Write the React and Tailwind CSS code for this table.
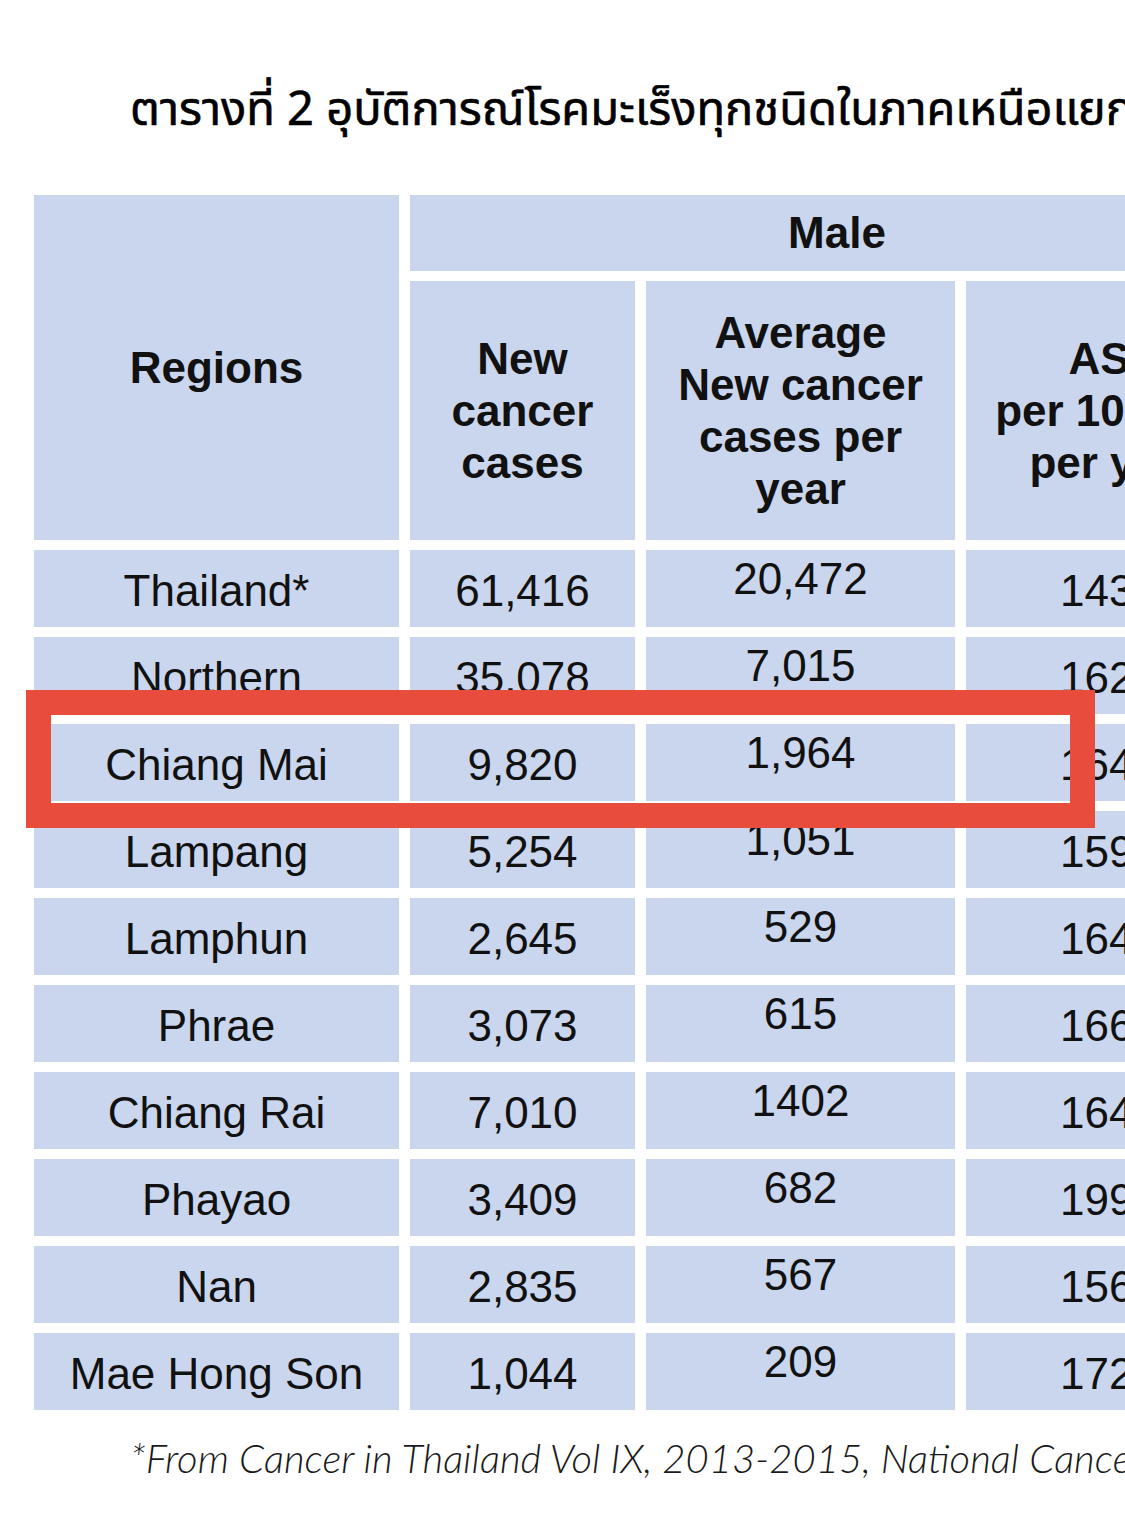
import React from "react";

const rows = [
  { region: "Thailand*", cases: "61,416", avg: "20,472", asr: "143.6" },
  { region: "Northern", cases: "35,078", avg: "7,015", asr: "162.3" },
  { region: "Chiang Mai", cases: "9,820", avg: "1,964", asr: "164.1" },
  { region: "Lampang", cases: "5,254", avg: "1,051", asr: "159.7" },
  { region: "Lamphun", cases: "2,645", avg: "529", asr: "164.2" },
  { region: "Phrae", cases: "3,073", avg: "615", asr: "166.8" },
  { region: "Chiang Rai", cases: "7,010", avg: "1402", asr: "164.5" },
  { region: "Phayao", cases: "3,409", avg: "682", asr: "199.0" },
  { region: "Nan", cases: "2,835", avg: "567", asr: "156.9" },
  { region: "Mae Hong Son", cases: "1,044", avg: "209", asr: "172.4" },
];

const cell = "bg-[#c9d6ed] flex items-center justify-center text-center whitespace-nowrap";

const App = () => {
  return (
    <div
      className="relative w-[1125px] h-[1527px] overflow-hidden bg-white text-[#111]"
      style={{ fontFamily: '"Liberation Sans", Arial, sans-serif' }}
    >
      <div
        className="h-[195px] pt-[81px] pl-[130px] whitespace-nowrap text-[47px] leading-[60px] text-black [-webkit-text-stroke:0.6px_black]"
        style={{ fontFamily: '"Noto Sans Thai", "Loma", "Garuda", "Noto Sans", "DejaVu Sans", sans-serif' }}
      >
        ตารางที่ 2 อุบัติการณ์โรคมะเร็งทุกชนิดในภาคเหนือแยกตามจังหวัด
      </div>

      <div className="ml-[34px] w-[1230px] grid grid-cols-[365px_225px_309px_298px] grid-rows-[76px_259px_repeat(10,77px)] gap-x-[11px] gap-y-[10px]">
        <div className={`${cell} row-span-2 font-bold text-[44px]`}>Regions</div>
        <div className={`${cell} col-span-3 font-bold text-[44px]`}>Male</div>
        <div className={`${cell} font-bold text-[44px] leading-[52px] whitespace-normal`}>
          New
          <br />
          cancer
          <br />
          cases
        </div>
        <div className={`${cell} font-bold text-[44px] leading-[52px] whitespace-normal`}>
          Average
          <br />
          New cancer
          <br />
          cases per
          <br />
          year
        </div>
        <div className={`${cell} font-bold text-[44px] leading-[52px] whitespace-normal`}>
          ASR
          <br />
          per 100,000
          <br />
          per year
        </div>

        {rows.map((r) => (
          <React.Fragment key={r.region}>
            <div className={`${cell} text-[44px] pt-[4px]`}>{r.region}</div>
            <div className={`${cell} text-[44px] pt-[4px]`}>{r.cases}</div>
            <div className={`${cell} text-[44px] pb-[20px]`}>{r.avg}</div>
            <div className={`${cell} text-[44px] pt-[4px]`}>{r.asr}</div>
          </React.Fragment>
        ))}
      </div>

      <div
        className="mt-[28px] pl-[130px] whitespace-nowrap italic font-light text-[40px] leading-[40px] text-[#1a1a1a]"
        style={{ fontFamily: 'Lato, "Liberation Sans", sans-serif' }}
      >
        *From Cancer in Thailand Vol IX, 2013-2015, National Cancer Institute
      </div>

      <div className="absolute left-[26px] top-[690px] w-[1069px] h-[138px] border-[25px] border-[#e74c3c]" />
    </div>
  );
};

export default App;
